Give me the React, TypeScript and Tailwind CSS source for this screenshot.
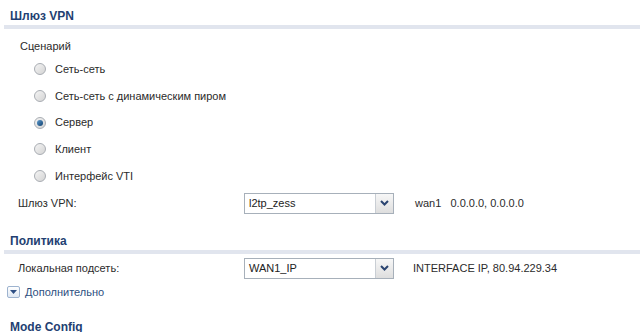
import React from 'react'

const font = "font-['Liberation_Sans',Arial,sans-serif]"

const SectionTitle = ({ title }: { title: string }) => (
    <div className="pl-1">
        <h2 className="pl-[6px] text-[12px] leading-[14px] font-bold text-[#233f72]">{title}</h2>
        <div className="h-[4px] bg-[#e1e5ee] mt-[2px]" />
    </div>
)

const Radio = ({ checked }: { checked?: boolean }) => (
    <span className="w-[12px] h-[12px] rounded-full border border-[#a9adb3] bg-gradient-to-br from-[#f4f4f4] to-[#d4d4d4] flex items-center justify-center">
        {checked && <span className="w-[6px] h-[6px] rounded-full bg-gradient-to-br from-[#5f9dd0] to-[#0d3f6e]" />}
    </span>
)

const Select = ({ value }: { value: string }) => (
    <div className="w-[150px] h-[21px] border border-[#a7b0ba] bg-white flex">
        <span className="flex-1 pl-[4px] leading-[19px] text-[#222]">{value}</span>
        <span className="w-[18px] border-l border-[#c9ced4] bg-gradient-to-b from-[#f7f7f7] to-[#dedede] flex items-center justify-center">
            <svg width="9" height="6" viewBox="0 0 9 6">
                <path d="M1 1 L4.5 4.5 L8 1" fill="none" stroke="#2a4470" strokeWidth="2" />
            </svg>
        </span>
    </div>
)

const scenarios = [
    { label: 'Сеть-сеть' },
    { label: 'Сеть-сеть с динамическим пиром' },
    { label: 'Сервер', checked: true },
    { label: 'Клиент' },
    { label: 'Интерфейс VTI' },
]

const App = () => {
    return (
        <div className={`w-[640px] h-[332px] overflow-hidden bg-white text-[11px] text-[#2b2b2b] ${font}`}>
            <div className="pt-[9px]">
                <SectionTitle title="Шлюз VPN" />
            </div>
            <div className="pl-[20px] pt-[10px] leading-[14px]">Сценарий</div>
            <ul className="pl-[34px] pt-[3px]">
                {scenarios.map((s) => (
                    <li key={s.label} className="h-[26.7px] flex items-center gap-[9px]">
                        <Radio checked={s.checked} />
                        <span>{s.label}</span>
                    </li>
                ))}
            </ul>
            <div className="flex items-center h-[22px] mt-[3px]">
                <span className="w-[244px] pl-[18px]">Шлюз VPN:</span>
                <Select value="l2tp_zess" />
                <span className="pl-[21px]">wan1&nbsp;&nbsp;&nbsp;0.0.0.0, 0.0.0.0</span>
            </div>
            <div className="pt-[20px]">
                <SectionTitle title="Политика" />
            </div>
            <div className="flex items-center h-[22px] mt-[3px]">
                <span className="w-[244px] pl-[18px]">Локальная подсеть:</span>
                <Select value="WAN1_IP" />
                <span className="pl-[19px]">INTERFACE IP, 80.94.229.34</span>
            </div>
            <div className="flex items-center gap-[5px] pl-[7px] mt-[5px] h-[16px]">
                <span className="w-[13px] h-[12px] rounded-[2px] border border-[#9db3cf] bg-gradient-to-b from-[#ffffff] to-[#dfe8f3] flex items-center justify-center">
                    <svg width="7" height="4" viewBox="0 0 7 4">
                        <path d="M0 0 H7 L3.5 4 Z" fill="#2e4f84" />
                    </svg>
                </span>
                <span className="text-[#2d4f7f]">Дополнительно</span>
            </div>
            <div className="pt-[20px]">
                <SectionTitle title="Mode Config" />
            </div>
        </div>
    )
}

export default App
